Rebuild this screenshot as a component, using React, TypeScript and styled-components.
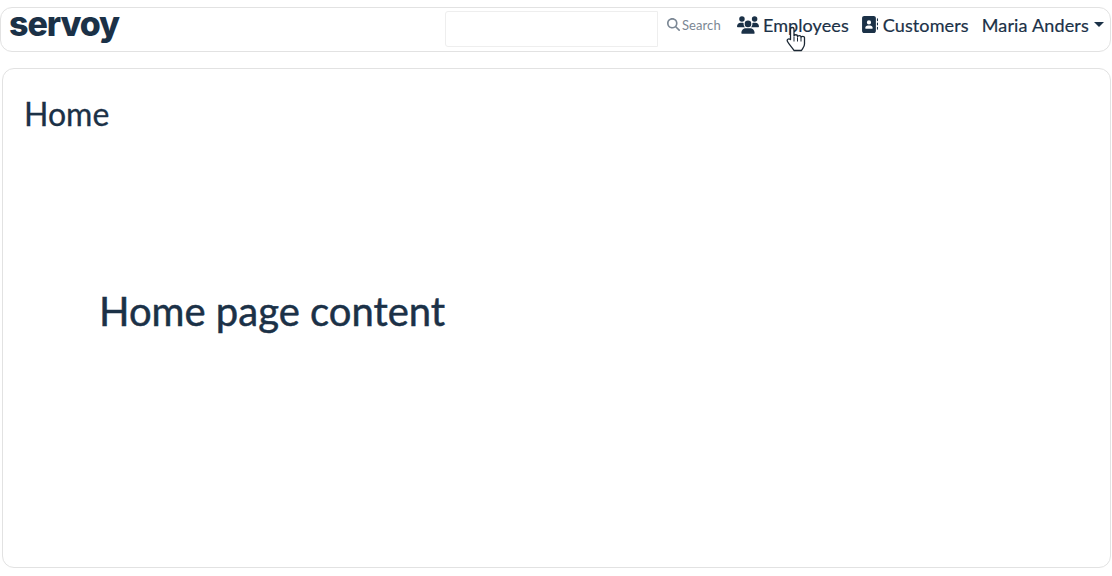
import React from 'react';
import styled, { createGlobalStyle } from 'styled-components';
import { FaAddressBook, FaMagnifyingGlass, FaUsers } from 'react-icons/fa6';

const GlobalStyle = createGlobalStyle`
    html, body {
        margin: 0;
        padding: 0;
        background: #fff;
        color: #1b3147;
        font-family: 'Lato', 'Liberation Sans', sans-serif;
    }
`;

const Page = styled.div`
    width: 1112px;
    height: 576px;
    padding-top: 7px;
    box-sizing: border-box;
    overflow: hidden;
`;

const Navbar = styled.nav`
    width: 1111px;
    height: 45px;
    box-sizing: border-box;
    display: flex;
    align-items: center;
    border: 1px solid #e2e2e2;
    border-radius: 12px;
    padding: 0 6px 0 8px;
`;

const Logo = styled.div`
    font-family: 'Inter', 'Liberation Sans', sans-serif;
    font-weight: 800;
    font-size: 34px;
    line-height: 34px;
    letter-spacing: -1.1px;
    margin-bottom: 11px;
    color: #1b3147;
`;

const SearchBox = styled.div`
    margin: 0 0 1px auto;
    width: 213px;
    height: 36px;
    box-sizing: border-box;
    border: 1px solid #eeeeee;
    border-radius: 3px 0 0 3px;
`;

const SearchLabel = styled.div`
    display: flex;
    align-items: center;
    gap: 2px;
    margin: 0 0 10px 9px;
    font-size: 13px;
    letter-spacing: 0.1px;
    color: #7b8794;
    width: 70px;

    svg {
        width: 13px;
        height: 13px;
    }
`;

const NavLink = styled.a<{ $gap?: number; $spacing?: number; $end?: number }>`
    display: flex;
    align-items: center;
    gap: ${props => props.$gap ?? 4}px;
    font-size: 18px;
    letter-spacing: ${props => props.$spacing ?? 0.1}px;
    color: #1b3147;
    margin: 0 ${props => props.$end ?? 13}px 10px 0;
    white-space: nowrap;
    -webkit-text-stroke: 0.2px #1b3147;

    &:last-child {
        margin-right: 0;
    }
`;

const Caret = styled.span`
    width: 0;
    height: 0;
    margin-left: 1px;
    border-left: 5px solid transparent;
    border-right: 5px solid transparent;
    border-top: 5px solid #1b3147;
`;

const Cursor = styled.svg`
    position: absolute;
    left: 786px;
    top: 26px;
    width: 22px;
    height: 26px;
`;

const Content = styled.main`
    width: 1109px;
    height: 500px;
    box-sizing: border-box;
    margin: 16px 0 0 2px;
    border: 1px solid #e2e2e2;
    border-radius: 12px;
    padding: 26px 21px;
`;

const Title = styled.h1`
    margin: 0;
    font-weight: 400;
    font-size: 32px;
    line-height: 38px;
    color: #1b3147;
    -webkit-text-stroke: 0.3px #1b3147;
`;

const Body = styled.h2`
    margin: 153px 0 0 75px;
    font-weight: 400;
    font-size: 40px;
    line-height: 50px;
    color: #1b3147;
    -webkit-text-stroke: 0.5px #1b3147;
`;

const App: React.FC = () => (
    <Page>
        <GlobalStyle />
        <Navbar>
            <Logo>servoy</Logo>
            <SearchBox />
            <SearchLabel>
                <FaMagnifyingGlass />
                Search
            </SearchLabel>
            <NavLink $end={12}>
                <FaUsers size={22} />
                Employees
            </NavLink>
            <NavLink $gap={5}>
                <FaAddressBook size={17} />
                Customers
            </NavLink>
            <NavLink $spacing={0.17}>
                Maria Anders
                <Caret />
            </NavLink>
        </Navbar>
        <Cursor viewBox="0 0 22 26">
            <path
                d="M4.5 3c0-2 3.5-2 3.5 0v7c0-1.7 3.5-1.7 3.5 0v.8c0-1.6 3.5-1.6 3.5 0v.8c0-1.6 3.5-1.6 3.5 0V18c0 3-1.5 4-3 6.5H8c-1-2-5-6-6.5-9-1-2 1-3.5 3-2z"
                fill="#fff"
                stroke="#1b2733"
                strokeWidth="1.3"
                strokeLinejoin="round"
            />
            <path d="M8 11v4.5M11.5 11.5v4M15 12v3.5" stroke="#1b2733" strokeWidth="1" />
        </Cursor>
        <Content>
            <Title>Home</Title>
            <Body>Home page content</Body>
        </Content>
    </Page>
);

export default App;
